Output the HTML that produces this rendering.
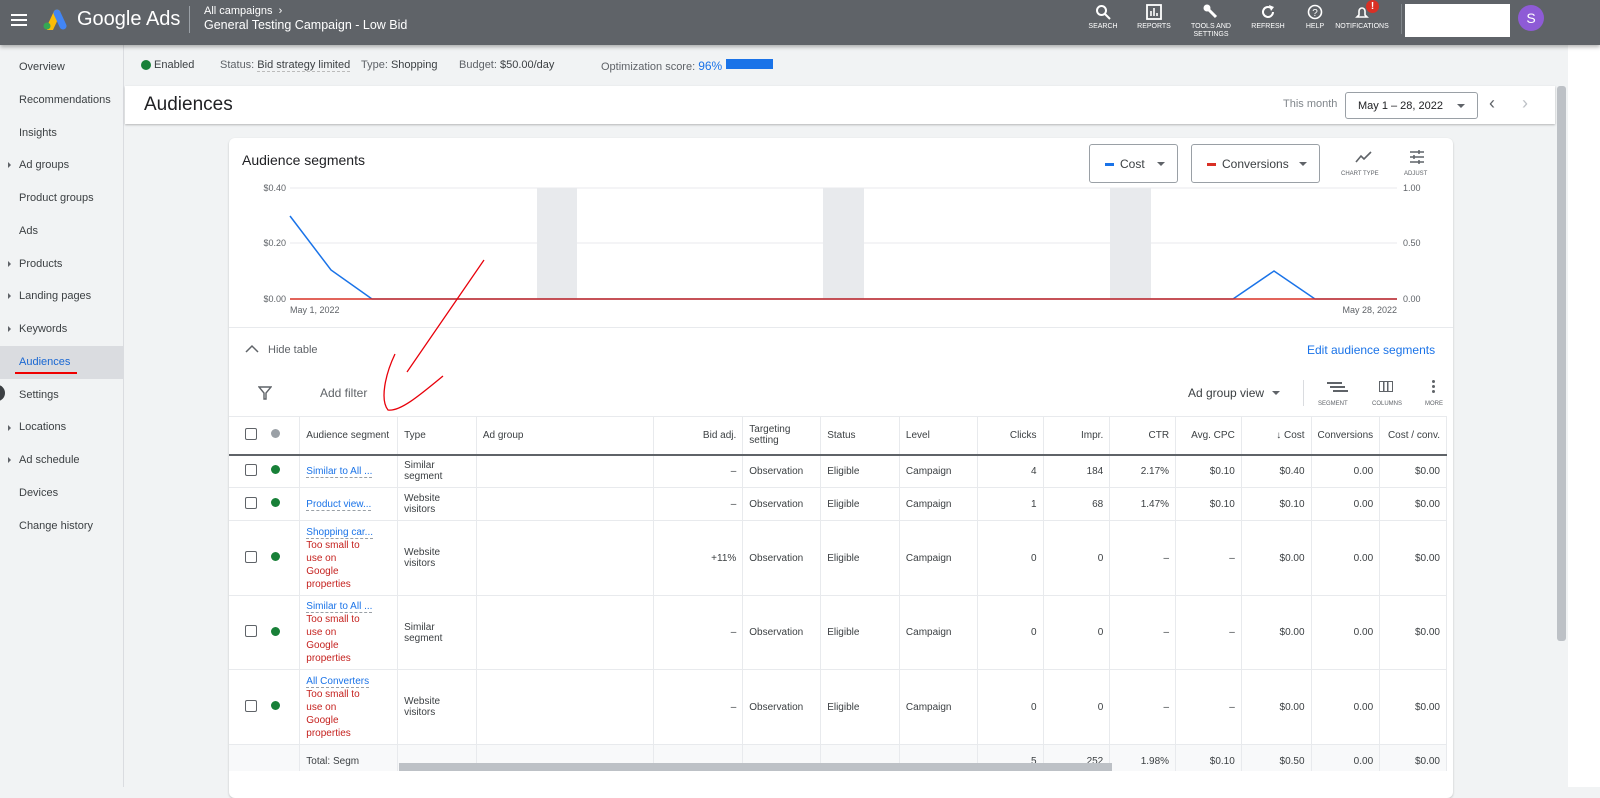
<!DOCTYPE html>
<html><head><meta charset="utf-8"><style>
*{box-sizing:border-box;margin:0;padding:0}
body{width:1600px;height:787px;overflow:hidden;font-family:"Liberation Sans",sans-serif;background:#f1f3f4;position:relative;color:#3c4043}
.abs{position:absolute}
.hdr{left:0;top:0;width:1600px;height:45px;background:#5f6368;box-shadow:0 2px 4px rgba(0,0,0,.3);z-index:5}
.hicon{position:absolute;top:4px;text-align:center;color:#fff;font-size:7px;line-height:8px;width:70px}
.side{left:0;top:45px;width:124px;height:742px;background:#f1f3f4;border-right:1px solid #dadce0}
.side div{position:absolute;left:19px;font-size:11px;color:#3c4043}
.side .ar{position:absolute;left:8px;width:0;height:0;border-left:3px solid #5f6368;border-top:3px solid transparent;border-bottom:3px solid transparent}
table{border-collapse:collapse;font-size:10px;color:#3c4043}
td{border-right:1px solid #e8eaed;border-bottom:1px solid #e8eaed;padding:0 6px;vertical-align:middle}
.r{text-align:right}
.cb{display:inline-block;width:12px;height:12px;border:1.5px solid #5f6368;border-radius:2px}
.dot{display:inline-block;width:9px;height:9px;border-radius:50%;background:#188038}
.lnk{color:#1a73e8;border-bottom:1px dashed #9aa0a6}
.red{color:#c5221f;display:inline-block;width:62px}
.tot td{vertical-align:top;padding-top:11px}
</style></head><body>
<div class="abs hdr">
 <div class="abs" style="left:11px;top:14px;width:16px;height:2px;background:#fff;box-shadow:0 5px 0 #fff,0 10px 0 #fff"></div>
 <svg class="abs" style="left:41px;top:8px" width="26" height="22" viewBox="0 0 26 22"><path d="M9 20 L16 5" stroke="#fbbc04" stroke-width="7" stroke-linecap="round"/><path d="M16 5 L22 18" stroke="#4285f4" stroke-width="7" stroke-linecap="round"/><circle cx="6" cy="18" r="3.5" fill="#34a853"/></svg>
 <div class="abs" style="left:77px;top:8px;font-size:20px;color:#fff">Google Ads</div>
 <div class="abs" style="left:189px;top:6px;width:1px;height:27px;background:#9aa0a6"></div>
 <div class="abs" style="left:204px;top:5px;font-size:11px;color:#fff">All campaigns &nbsp;›</div>
 <div class="abs" style="left:204px;top:18px;font-size:12.5px;color:#fff">General Testing Campaign - Low Bid</div>
 <div class="hicon" style="left:1068px"><svg width="16" height="16"><circle cx="6.5" cy="6.5" r="4.5" fill="none" stroke="#fff" stroke-width="2"/><path d="M10 10 L15 15" stroke="#fff" stroke-width="2"/></svg><br>SEARCH</div>
 <div class="hicon" style="left:1119px"><svg width="16" height="16"><rect x="1" y="1" width="14" height="14" fill="none" stroke="#fff" stroke-width="1.8"/><path d="M5 12V7M8 12V4M11 12V9" stroke="#fff" stroke-width="1.6"/></svg><br>REPORTS</div>
 <div class="hicon" style="left:1176px"><svg width="16" height="16"><path d="M3 3 L13 13" stroke="#fff" stroke-width="3"/><circle cx="4" cy="4" r="3.5" fill="#fff"/></svg><br>TOOLS AND<br>SETTINGS</div>
 <div class="hicon" style="left:1233px"><svg width="16" height="16"><path d="M13 8 A5 5 0 1 1 11 4" fill="none" stroke="#fff" stroke-width="2"/><path d="M9 1 L14 3 L11 7Z" fill="#fff"/></svg><br>REFRESH</div>
 <div class="hicon" style="left:1280px"><svg width="16" height="16"><circle cx="8" cy="8" r="6.5" fill="none" stroke="#fff" stroke-width="1.6"/><text x="8" y="12" font-size="10" fill="#fff" text-anchor="middle" font-family="Liberation Sans">?</text></svg><br>HELP</div>
 <div class="hicon" style="left:1327px"><svg width="16" height="16"><path d="M3 13 H13 L11 11 V7 A3 3 0 0 0 5 7 V11Z" fill="none" stroke="#fff" stroke-width="1.6"/></svg><br>NOTIFICATIONS</div>
 <div class="abs" style="left:1366px;top:0;width:13px;height:13px;border-radius:50%;background:#d93025;color:#fff;font-size:10px;font-weight:bold;text-align:center;line-height:13px">!</div>
 <div class="abs" style="left:1401px;top:4px;width:1px;height:30px;background:#80868b"></div>
 <div class="abs" style="left:1405px;top:4px;width:105px;height:33px;background:#fff"></div>
 <div class="abs" style="left:1518px;top:5px;width:26px;height:26px;border-radius:50%;background:#8e5bd6;color:#fff;font-size:14px;text-align:center;line-height:26px">S</div>
</div>
<div class="abs side">
 <div style="top:16px">Overview</div><div style="top:49px">Recommendations</div><div style="top:82px">Insights</div>
 <span class="ar" style="top:117px"></span><div style="top:114px">Ad groups</div>
 <div style="top:147px">Product groups</div><div style="top:180px">Ads</div>
 <span class="ar" style="top:216px"></span><div style="top:213px">Products</div>
 <span class="ar" style="top:248px"></span><div style="top:245px">Landing pages</div>
 <span class="ar" style="top:281px"></span><div style="top:278px">Keywords</div>
 <div style="left:0;top:301px;width:123px;height:33px;background:#dadce0"></div>
 <div style="top:311px;color:#1967d2">Audiences</div>
 <div style="left:15px;top:327px;width:62px;height:2px;background:#e00"></div>
 <div style="left:-10px;top:340px;width:15px;height:16px;border-radius:50%;background:#3c4043"></div>
 <div style="top:344px">Settings</div>
 <span class="ar" style="top:380px"></span><div style="top:376px">Locations</div>
 <span class="ar" style="top:412px"></span><div style="top:409px">Ad schedule</div>
 <div style="top:442px">Devices</div><div style="top:475px">Change history</div>
</div>
<div class="abs" style="left:125px;top:45px;width:1432px;height:40px;font-size:11px">
 <span class="abs dot" style="left:16px;top:15px;width:10px;height:10px"></span>
 <span class="abs" style="left:29px;top:14px">Enabled</span>
 <span class="abs" style="left:95px;top:14px;color:#5f6368">Status: <span style="color:#3c4043;border-bottom:1px dashed #bbb">Bid strategy limited</span></span>
 <span class="abs" style="left:236px;top:14px;color:#5f6368">Type: <span style="color:#3c4043">Shopping</span></span>
 <span class="abs" style="left:334px;top:14px;color:#5f6368">Budget: <span style="color:#3c4043">$50.00/day</span></span>
 <span class="abs" style="left:476px;top:14px;color:#5f6368">Optimization score: <span style="color:#1a73e8;font-size:12px">96%</span></span>
 <span class="abs" style="left:601px;top:14px;width:47px;height:10px;background:#1a73e8"></span>
</div>
<div class="abs" style="left:125px;top:86px;width:1430px;height:38px;background:#fff;box-shadow:0 1px 2px rgba(0,0,0,.25)">
 <div class="abs" style="left:19px;top:8px;font-size:19px;color:#202124">Audiences</div>
 <div class="abs" style="left:1158px;top:12px;font-size:11px;color:#80868b">This month</div>
 <div class="abs" style="left:1220px;top:6px;width:133px;height:27px;border:1px solid #9aa0a6;border-radius:3px;font-size:11px;padding:7px 12px;color:#202124">May 1 – 28, 2022<span style="position:absolute;right:12px;top:11px;border:4px solid transparent;border-top-color:#5f6368"></span></div>
 <div class="abs" style="left:1364px;top:7px;font-size:18px;color:#5f6368">‹</div>
 <div class="abs" style="left:1397px;top:7px;font-size:18px;color:#bdc1c6">›</div>
</div>
<div class="abs" style="left:1557px;top:86px;width:9px;height:555px;background:#bdc1c6;border-radius:3px"></div>
<div class="abs" style="left:1568px;top:0;width:32px;height:787px;background:#fff"></div>
<div class="abs" style="left:229px;top:138px;width:1224px;height:660px;background:#fff;border-radius:6px;box-shadow:0 1px 2px rgba(0,0,0,.2)">
 <div class="abs" style="left:13px;top:14px;font-size:14px;color:#202124">Audience segments</div>
 <div class="abs" style="left:860px;top:6px;width:89px;height:39px;border:1px solid #9aa0a6;border-radius:3px;font-size:12px;padding:12px 15px"><span style="display:inline-block;width:9px;height:3px;background:#1a73e8;vertical-align:middle;margin-right:6px"></span>Cost<span style="position:absolute;right:12px;top:17px;border:4px solid transparent;border-top-color:#5f6368"></span></div>
 <div class="abs" style="left:962px;top:6px;width:129px;height:39px;border:1px solid #9aa0a6;border-radius:3px;font-size:12px;padding:12px 15px"><span style="display:inline-block;width:9px;height:3px;background:#d93025;vertical-align:middle;margin-right:6px"></span>Conversions<span style="position:absolute;right:12px;top:17px;border:4px solid transparent;border-top-color:#5f6368"></span></div>
 <svg class="abs" style="left:1126px;top:12px" width="18" height="14"><path d="M1 12 L6 6 L9 9 L16 2" fill="none" stroke="#5f6368" stroke-width="1.6"/></svg>
 <div class="abs" style="left:1112px;top:33px;font-size:6px;color:#5f6368">CHART TYPE</div>
 <svg class="abs" style="left:1180px;top:11px" width="16" height="16"><path d="M1 3H15M1 8H15M1 13H15" stroke="#5f6368" stroke-width="1.5"/><path d="M10 1V5M5 6V10M10 11V15" stroke="#5f6368" stroke-width="1.5"/></svg>
 <div class="abs" style="left:1175px;top:33px;font-size:6px;color:#5f6368">ADJUST</div>
 <svg class="abs" style="left:0;top:40px" width="1224" height="150" font-family="Liberation Sans" font-size="9" fill="#5f6368">
  <rect x="308" y="10" width="40" height="111" fill="#e8eaed"/><rect x="594" y="10" width="41" height="111" fill="#e8eaed"/><rect x="881" y="10" width="41" height="111" fill="#e8eaed"/>
  <path d="M61 10H1168M61 65H1168" stroke="#e8eaed"/>
  <text x="57" y="13" text-anchor="end">$0.40</text><text x="57" y="68" text-anchor="end">$0.20</text><text x="57" y="124" text-anchor="end">$0.00</text>
  <text x="1174" y="13">1.00</text><text x="1174" y="68">0.50</text><text x="1174" y="124">0.00</text>
  <text x="61" y="135">May 1, 2022</text><text x="1168" y="135" text-anchor="end">May 28, 2022</text>
  <path d="M61 38 L102 92 L143 121 H1004 L1045 93 L1086 121 H1168" fill="none" stroke="#1a73e8" stroke-width="1.5"/>
  <path d="M61 121 H1168" stroke="#d93025" stroke-width="1.5"/>
 </svg>
 <div class="abs" style="left:0;top:189px;width:1224px;height:1px;background:#e8eaed"></div>
 <svg class="abs" style="left:16px;top:206px" width="14" height="10"><path d="M1 8 L7 2 L13 8" fill="none" stroke="#5f6368" stroke-width="1.5"/></svg>
 <div class="abs" style="left:39px;top:206px;font-size:11px;color:#5f6368">Hide table</div>
 <div class="abs" style="left:1078px;top:205px;font-size:12px;color:#1a73e8">Edit audience segments</div>
 <svg class="abs" style="left:29px;top:248px" width="14" height="14"><path d="M1 1H13L8 7V13L6 13V7Z" fill="none" stroke="#5f6368" stroke-width="1.4"/></svg>
 <div class="abs" style="left:91px;top:248px;font-size:12px;color:#5f6368">Add filter</div>
 <div class="abs" style="left:959px;top:248px;font-size:12px;color:#3c4043">Ad group view<span style="display:inline-block;margin-left:8px;border:4px solid transparent;border-top-color:#5f6368;vertical-align:-2px"></span></div>
 <div class="abs" style="left:1074px;top:242px;width:1px;height:26px;background:#dadce0"></div>
 <div class="abs" style="left:1098px;top:244px;width:15px;height:2px;background:#5f6368;box-shadow:3px 4px 0 #5f6368,6px 8px 0 #5f6368"></div>
 <div class="abs" style="left:1089px;top:263px;font-size:6px;color:#5f6368">SEGMENT</div>
 <div class="abs" style="left:1150px;top:243px;width:14px;height:11px;border:1.5px solid #5f6368;background:linear-gradient(90deg,transparent 3px,#5f6368 3px,#5f6368 4.5px,transparent 4.5px,transparent 7px,#5f6368 7px,#5f6368 8.5px,transparent 8.5px)"></div>
 <div class="abs" style="left:1143px;top:263px;font-size:6px;color:#5f6368">COLUMNS</div>
 <div class="abs" style="left:1203px;top:242px;width:3px;height:3px;background:#5f6368;border-radius:50%;box-shadow:0 5px 0 #5f6368,0 10px 0 #5f6368"></div>
 <div class="abs" style="left:1196px;top:263px;font-size:6px;color:#5f6368">MORE</div>
 <table class="abs" style="left:0;top:278px;width:1218px;border-top:1px solid #e8eaed">
  <colgroup><col style="width:42px"><col style="width:29px"><col style="width:98px"><col style="width:79px"><col style="width:178px"><col style="width:90px"><col style="width:78px"><col style="width:79px"><col style="width:78px"><col style="width:66px"><col style="width:67px"><col style="width:66px"><col style="width:66px"><col style="width:70px"><col style="width:65px"><col style="width:67px"></colgroup>
  <tr style="height:38px;border-bottom:2px solid #5f6368"><td style="border-right:0;padding-left:16px"><span class="cb"></span></td><td style="padding:0"><span class="dot" style="background:#9aa0a6"></span></td><td>Audience segment</td><td>Type</td><td>Ad group</td><td class="r">Bid adj.</td><td>Targeting setting</td><td>Status</td><td>Level</td><td class="r">Clicks</td><td class="r">Impr.</td><td class="r">CTR</td><td class="r">Avg. CPC</td><td class="r">↓ Cost</td><td style="white-space:nowrap;overflow:hidden">Conversions</td><td class="r">Cost / conv.</td></tr>
  <tr style="height:33px"><td style="border-right:0;padding-left:16px"><span class="cb"></span></td><td style="padding:0"><span class="dot"></span></td><td><span class="lnk">Similar to All ...</span></td><td>Similar segment</td><td></td><td class="r">–</td><td>Observation</td><td>Eligible</td><td>Campaign</td><td class="r">4</td><td class="r">184</td><td class="r">2.17%</td><td class="r">$0.10</td><td class="r">$0.40</td><td class="r">0.00</td><td class="r">$0.00</td></tr>
  <tr style="height:33px"><td style="border-right:0;padding-left:16px"><span class="cb"></span></td><td style="padding:0"><span class="dot"></span></td><td><span class="lnk">Product view...</span></td><td>Website visitors</td><td></td><td class="r">–</td><td>Observation</td><td>Eligible</td><td>Campaign</td><td class="r">1</td><td class="r">68</td><td class="r">1.47%</td><td class="r">$0.10</td><td class="r">$0.10</td><td class="r">0.00</td><td class="r">$0.00</td></tr>
  <tr style="height:75px"><td style="border-right:0;padding-left:16px"><span class="cb"></span></td><td style="padding:0"><span class="dot"></span></td><td style="line-height:13px"><span class="lnk">Shopping car...</span><br><span class="red">Too small to use on Google properties</span></td><td>Website visitors</td><td></td><td class="r">+11%</td><td>Observation</td><td>Eligible</td><td>Campaign</td><td class="r">0</td><td class="r">0</td><td class="r">–</td><td class="r">–</td><td class="r">$0.00</td><td class="r">0.00</td><td class="r">$0.00</td></tr>
  <tr style="height:74px"><td style="border-right:0;padding-left:16px"><span class="cb"></span></td><td style="padding:0"><span class="dot"></span></td><td style="line-height:13px"><span class="lnk">Similar to All ...</span><br><span class="red">Too small to use on Google properties</span></td><td>Similar segment</td><td></td><td class="r">–</td><td>Observation</td><td>Eligible</td><td>Campaign</td><td class="r">0</td><td class="r">0</td><td class="r">–</td><td class="r">–</td><td class="r">$0.00</td><td class="r">0.00</td><td class="r">$0.00</td></tr>
  <tr style="height:75px"><td style="border-right:0;padding-left:16px"><span class="cb"></span></td><td style="padding:0"><span class="dot"></span></td><td style="line-height:13px"><span class="lnk">All Converters</span><br><span class="red">Too small to use on Google properties</span></td><td>Website visitors</td><td></td><td class="r">–</td><td>Observation</td><td>Eligible</td><td>Campaign</td><td class="r">0</td><td class="r">0</td><td class="r">–</td><td class="r">–</td><td class="r">$0.00</td><td class="r">0.00</td><td class="r">$0.00</td></tr>
  <tr class="tot" style="height:38px;background:#f8f9fa"><td style="border-right:0"></td><td></td><td>Total: Segm</td><td></td><td></td><td></td><td></td><td></td><td></td><td class="r">5</td><td class="r">252</td><td class="r">1.98%</td><td class="r">$0.10</td><td class="r">$0.50</td><td class="r">0.00</td><td class="r">$0.00</td></tr>
 </table>
</div>
<div class="abs" style="left:229px;top:771px;width:1224px;height:16px;background:#fff"></div>
<div class="abs" style="left:399px;top:763px;width:713px;height:8px;background:#bdc1c6"></div>
<svg class="abs" style="left:0;top:0" width="1600" height="787"><path d="M484 260 L407 372" stroke="#e8000a" stroke-width="1.3" fill="none"/><path d="M443 376 C420 395 400 412 388 410 C380 400 385 375 395 354" stroke="#e8000a" stroke-width="1.3" fill="none"/></svg>
</body></html>
